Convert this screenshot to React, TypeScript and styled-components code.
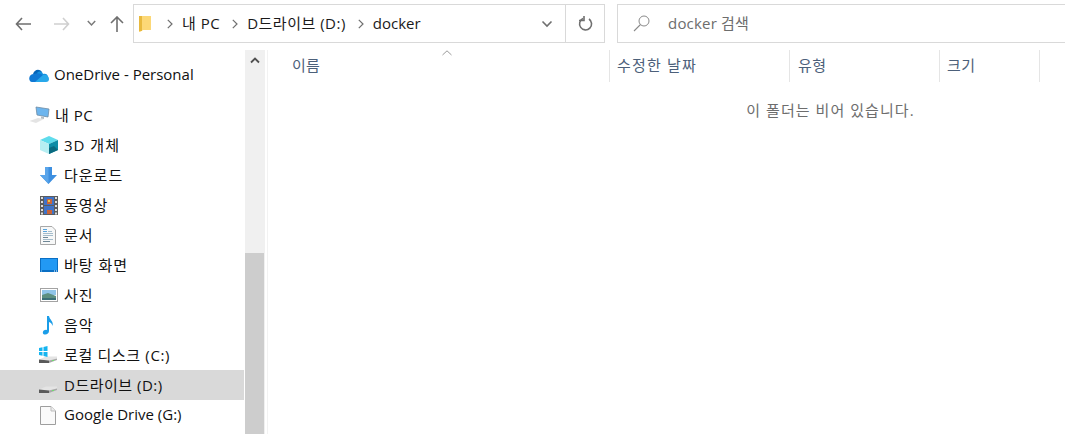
import React from "react";
import styled, { createGlobalStyle } from "styled-components";

const FONT = `"Open Sans", "Noto Sans CJK KR", sans-serif`;

const GlobalStyle = createGlobalStyle`
    html, body {
        margin: 0;
        padding: 0;
        background: #fff;
        overflow: hidden;
    }
    body {
        font-family: ${FONT};
        font-size: 15px;
    }
`;

const Window = styled.div`
    width: 1065px;
    height: 434px;
    display: flex;
    flex-direction: column;
    overflow: hidden;
`;

const Toolbar = styled.div`
    height: 50px;
    flex: none;
    display: flex;
    align-items: flex-start;
    padding-top: 4px;
    box-sizing: border-box;
`;

const NavGroup = styled.div`
    width: 133px;
    height: 39px;
    flex: none;
    display: flex;
    align-items: center;
    padding-left: 15px;
    box-sizing: border-box;
`;

const NavIcon = styled.svg<{ $gap: number }>`
    display: block;
    margin-right: ${(p) => p.$gap}px;
    flex: none;
`;

const AddressBox = styled.div`
    width: 472px;
    height: 39px;
    flex: none;
    display: flex;
    border: 1px solid #d9d9d9;
    box-sizing: border-box;
`;

const Crumbs = styled.div`
    flex: 1;
    display: flex;
    align-items: center;
    padding-left: 5px;
    color: #1a1a1a;
`;

const FolderIcon = styled.svg`
    display: block;
    flex: none;
    margin-right: 4px;
`;

const Label = styled.span<{ $track?: number }>`
    white-space: nowrap;
    letter-spacing: ${(p) => p.$track ?? 0}px;
    margin-bottom: 2px;
`;

const CrumbSep = styled.svg`
    display: block;
    flex: none;
    margin: 0 9px 0 12px;
`;

const AddressButton = styled.div<{ $width: number; $divided?: boolean }>`
    width: ${(p) => p.$width}px;
    flex: none;
    display: flex;
    align-items: center;
    justify-content: center;
    border-left: ${(p) => (p.$divided ? "1px solid #d9d9d9" : "none")};
    box-sizing: border-box;
`;

const SearchBox = styled.div`
    margin-left: 12px;
    flex: 1;
    height: 39px;
    display: flex;
    align-items: center;
    padding-left: 15px;
    border: 1px solid #d9d9d9;
    border-right: none;
    box-sizing: border-box;
    color: #6d6d6d;
`;

const SearchText = styled(Label)`
    margin-left: 18px;
`;

const Body = styled.div`
    flex: 1;
    display: flex;
    min-height: 0;
`;

const Sidebar = styled.nav`
    width: 245px;
    flex: none;
    padding-top: 10px;
    box-sizing: border-box;
`;

const NavRow = styled.div<{ $indent: number; $selected?: boolean; $spaced?: boolean }>`
    height: 30px;
    display: flex;
    align-items: center;
    padding-left: ${(p) => p.$indent}px;
    margin-right: 1px;
    margin-bottom: ${(p) => (p.$spaced ? 10 : 0)}px;
    background: ${(p) => (p.$selected ? "#d9d9d9" : "transparent")};
    color: #111;
`;

const RowIcon = styled.svg<{ $gap: number }>`
    display: block;
    flex: none;
    margin-right: ${(p) => p.$gap}px;
`;

const Scrollbar = styled.div`
    width: 20px;
    flex: none;
    display: flex;
    flex-direction: column;
    background: #f0f0f0;
`;

const ScrollUp = styled.div`
    height: 21px;
    display: flex;
    align-items: center;
    justify-content: center;
`;

const ScrollSpace = styled.div`
    height: 182px;
`;

const ScrollThumb = styled.div`
    flex: 1;
    margin-right: 1px;
    background: #cdcdcd;
`;

const Content = styled.main`
    flex: 1;
    min-width: 0;
    margin-left: 2px;
    border-left: 1px solid #f2f2f2;
`;

const Header = styled.div`
    position: relative;
    height: 32px;
    display: flex;
`;

const SortCaret = styled.svg`
    position: absolute;
    left: 174px;
    top: 0;
`;

const Column = styled.div<{ $width: number; $pad: number }>`
    width: ${(p) => p.$width}px;
    flex: none;
    padding-left: ${(p) => p.$pad}px;
    box-sizing: border-box;
    border-right: 1px solid #e5e5e5;
    color: #4c607a;
    line-height: 31px;
`;

const EmptyNote = styled.div`
    width: 1125px;
    margin-top: 17px;
    text-align: center;
    color: #6d6d6d;
    line-height: 22px;
    letter-spacing: 1.05px;
`;

const Chevron = ({ color }: { color: string }) => (
    <svg width="12" height="8" viewBox="0 0 12 8">
        <path d="M1.5 1.5 L6 6 L10.5 1.5" fill="none" stroke={color} strokeWidth="1.6" />
    </svg>
);

const Sep = () => (
    <CrumbSep width="6" height="10" viewBox="0 0 6 10">
        <path d="M0.8 0.8 L5 5 L0.8 9.2" fill="none" stroke="#6f6f6f" strokeWidth="1.2" />
    </CrumbSep>
);

const OneDriveIcon = () => (
    <RowIcon $gap={5} width="20" height="13" viewBox="0 0 20 13">
        <path d="M4 5 C5 1 10 -1 13 3 L11 10 Z" fill="#0364b8" />
        <path d="M8 4 C10 2 13 2 14 5 C16 4 19 5 19 8 L10 9 Z" fill="#1490df" />
        <path d="M5 5 C1 5 -1 9 1 12 Q1.500 13 3 13 L11 13 L14 6 Q9 3 5 5 Z" fill="#0f78d4" />
        <path d="M14 6 C17 5 20 7 20 10 C20 12 19 13 17 13 L6 13 Z" fill="#28a8ea" />
    </RowIcon>
);

const PcIcon = () => (
    <RowIcon $gap={4} width="22" height="18" viewBox="0 0 22 18">
        <path d="M7 1 L20 3 L19 11 L8 9 Z" fill="#6db5ee" stroke="#6f8ba3" strokeWidth="0.8" />
        <path d="M0.500 15 L9 12 L15 13 L7 17 Z" fill="#e4e4e4" />
        <path d="M12 10.500 L15 11 L15 13 L12 12.500 Z" fill="#b4bcc2" />
    </RowIcon>
);

const CubeIcon = () => (
    <RowIcon $gap={6} width="18" height="18" viewBox="0 0 18 18">
        <path d="M9 0 L18 4 L9 8 L0 4 Z" fill="#5fdcec" />
        <path d="M0 4 L9 8 L9 18 L0 14 Z" fill="#b6eef2" />
        <path d="M9 8 L18 4 L18 14 L9 18 Z" fill="#0d8ca6" />
        <path d="M9 12 L14 10 L18 14 L9 18 Z" fill="#0a6a80" />
    </RowIcon>
);

const DownloadIcon = () => (
    <RowIcon $gap={7} width="17" height="17" viewBox="0 0 17 17">
        <path d="M5 0 H12 V8 H17 L8.500 17 L0 8 H5 Z" fill="#3d8fe0" />
        <path d="M5 0 H8.500 V17 L0 8 H5 Z" fill="#5aa5ea" />
    </RowIcon>
);

const FilmIcon = () => (
    <RowIcon $gap={6} width="18" height="19" viewBox="0 0 18 19">
        <rect width="18" height="19" fill="#5c5c5c" />
        <rect x="1" y="1" width="2" height="2" fill="#ddd" />
        <rect x="1" y="5" width="2" height="2" fill="#ddd" />
        <rect x="1" y="9" width="2" height="2" fill="#ddd" />
        <rect x="1" y="13" width="2" height="2" fill="#ddd" />
        <rect x="1" y="16.500" width="2" height="2" fill="#ddd" />
        <rect x="15" y="1" width="2" height="2" fill="#ddd" />
        <rect x="15" y="5" width="2" height="2" fill="#ddd" />
        <rect x="15" y="9" width="2" height="2" fill="#ddd" />
        <rect x="15" y="13" width="2" height="2" fill="#ddd" />
        <rect x="15" y="16.500" width="2" height="2" fill="#ddd" />
        <rect x="4" y="1" width="10" height="8" fill="#3f73c8" />
        <rect x="4" y="10" width="10" height="8" fill="#3f73c8" />
        <rect x="7" y="3" width="5" height="5" fill="#c9653a" />
        <rect x="8" y="4" width="2" height="2" fill="#e8c84a" />
        <rect x="7" y="14" width="5" height="4" fill="#c9653a" />
    </RowIcon>
);

const DocIcon = () => (
    <RowIcon $gap={8} width="16" height="19" viewBox="0 0 16 19">
        <path d="M0.500 0.500 H12 L15.500 4 V18.500 H0.500 Z" fill="#f7f8f8" stroke="#a8a8a8" />
        <path d="M3 3.500 H7 M3 5.500 H7" stroke="#5aa5dc" strokeWidth="1" />
        <path d="M8 5.500 H12 M3 7.500 H13 M3 9.500 H13 M3 13.500 H13" stroke="#a4bccb" strokeWidth="1" />
        <path d="M3 11.500 H8 M3 15.500 H10" stroke="#6f8796" strokeWidth="1" />
    </RowIcon>
);

const DesktopIcon = () => (
    <RowIcon $gap={6} width="18" height="14" viewBox="0 0 18 14">
        <rect width="18" height="14" fill="#0a6fc4" />
        <rect x="1" y="1" width="16" height="11" fill="#2299f4" />
        <rect x="14" y="12.500" width="1" height="1" fill="#fff" />
        <rect x="16" y="12.500" width="1" height="1" fill="#fff" />
        <rect x="1" y="12.500" width="1" height="1" fill="#9fd4f7" />
    </RowIcon>
);

const PhotoIcon = () => (
    <RowIcon $gap={6} width="18" height="14" viewBox="0 0 18 14">
        <rect x="0.500" y="0.500" width="17" height="13" fill="#fff" stroke="#a3a3a3" />
        <rect x="2" y="2" width="14" height="5" fill="#8fc4e8" />
        <path d="M2 7 L8 5 L16 8 V12 H2 Z" fill="#5c8f80" />
        <rect x="2" y="10" width="14" height="2" fill="#3a6f78" />
    </RowIcon>
);

const MusicIcon = () => (
    <RowIcon $gap={7} width="17" height="19" viewBox="0 0 17 19">
        <path d="M7 0 H9 C9.500 4 14 5 12.500 10 C12 7.500 10.500 6.500 9 6 V15 C9 17.500 6.500 19 4.500 18.500 C2 18 2.500 14.500 5 14 Q6 13.700 7 14 Z" fill="#1b9de8" />
    </RowIcon>
);

const DriveBody = () => (
    <>
        <path d="M0 13.500 L7 10.500 H18 V12.500 L10 14.500 Z" fill="#e4e4e4" />
        <path d="M10 14.500 L18 12.500 V14 L10 17 Z" fill="#a9a9a9" />
        <path d="M0 13.500 L10 14.500 V17 H0 Z" fill="#5a5a5a" />
        <rect x="13" y="14" width="2" height="1" fill="#6fdc6f" />
    </>
);

const LocalDiskIcon = () => (
    <RowIcon $gap={6} width="19" height="18" viewBox="0 0 19 18">
        <DriveBody />
        <path d="M0 2 L3.500 1.200 V5 H0 Z M4.500 1 L8.500 0 V5 H4.500 Z M0 6 H3.500 V9.800 L0 9 Z M4.500 6 H8.500 V11 L4.500 10 Z" fill="#14b4f0" />
    </RowIcon>
);

const DriveIcon = () => (
    <RowIcon $gap={6} width="19" height="18" viewBox="0 0 19 18">
        <DriveBody />
    </RowIcon>
);

const FileIcon = () => (
    <RowIcon $gap={8} width="16" height="19" viewBox="0 0 16 19">
        <path d="M0.500 0.500 H11 L15.500 5 V18.500 H0.500 Z" fill="#fafafa" stroke="#9e9e9e" />
        <path d="M11 0.500 V5 H15.500" fill="#eee" stroke="#bdbdbd" />
    </RowIcon>
);

const App = () => {
    return (
        <Window>
            <GlobalStyle />
            <Toolbar>
                <NavGroup>
                    <NavIcon $gap={23} width="16" height="14" viewBox="0 0 16 14">
                        <path d="M7 1 L1.500 7 L7 13 M1.500 7 H16" fill="none" stroke="#6f6f6f" strokeWidth="1.6" />
                    </NavIcon>
                    <NavIcon $gap={17} width="16" height="14" viewBox="0 0 16 14">
                        <path d="M9 1 L14.500 7 L9 13 M14.500 7 H0" fill="none" stroke="#cfcfcf" strokeWidth="1.6" />
                    </NavIcon>
                    <NavIcon $gap={14} width="9" height="7" viewBox="0 0 9 7">
                        <path d="M0.800 1 L4.500 5 L8.200 1" fill="none" stroke="#7a7a7a" strokeWidth="1.500" />
                    </NavIcon>
                    <NavIcon $gap={0} width="14" height="16" viewBox="0 0 14 16">
                        <path d="M1 7 L7 1 L13 7 M7 1 V16" fill="none" stroke="#6f6f6f" strokeWidth="1.6" />
                    </NavIcon>
                </NavGroup>
                <AddressBox>
                    <Crumbs>
                        <FolderIcon width="12" height="16" viewBox="0 0 12 16">
                            <path d="M0 0 H12 V14 H4 L1 16 H0 Z" fill="#fcd877" />
                            <rect x="0" y="0" width="3" height="15" fill="#e8b93e" />
                        </FolderIcon>
                        <Sep />
                        <Label $track={0.5}>내 PC</Label>
                        <Sep />
                        <Label $track={0.5}>D드라이브 (D:)</Label>
                        <Sep />
                        <Label>docker</Label>
                    </Crumbs>
                    <AddressButton $width={36}>
                        <Chevron color="#6f6f6f" />
                    </AddressButton>
                    <AddressButton $width={39} $divided>
                        <svg width="15" height="16" viewBox="0 0 15 16">
                            <path d="M5 2.500 A6 6 0 1 0 11 3" fill="none" stroke="#6f6f6f" strokeWidth="1.600" />
                            <path d="M5 0 V5 H0" fill="none" stroke="#6f6f6f" strokeWidth="1.600" transform="translate(1 -0.500)" />
                        </svg>
                    </AddressButton>
                </AddressBox>
                <SearchBox>
                    <svg width="17" height="17" viewBox="0 0 17 17">
                        <circle cx="11" cy="6" r="5" fill="none" stroke="#8a8a8a" strokeWidth="1" />
                        <path d="M7.500 9.500 L1 16" stroke="#8a8a8a" strokeWidth="1.100" />
                    </svg>
                    <SearchText $track={0.2}>docker 검색</SearchText>
                </SearchBox>
            </Toolbar>
            <Body>
                <Sidebar>
                    <NavRow $indent={29} $spaced>
                        <OneDriveIcon />
                        <Label>OneDrive - Personal</Label>
                    </NavRow>
                    <NavRow $indent={29}>
                        <PcIcon />
                        <Label $track={0.5}>내 PC</Label>
                    </NavRow>
                    <NavRow $indent={40}>
                        <CubeIcon />
                        <Label $track={1}>3D 개체</Label>
                    </NavRow>
                    <NavRow $indent={40}>
                        <DownloadIcon />
                        <Label $track={1}>다운로드</Label>
                    </NavRow>
                    <NavRow $indent={40}>
                        <FilmIcon />
                        <Label $track={1}>동영상</Label>
                    </NavRow>
                    <NavRow $indent={40}>
                        <DocIcon />
                        <Label $track={1}>문서</Label>
                    </NavRow>
                    <NavRow $indent={40}>
                        <DesktopIcon />
                        <Label $track={1}>바탕 화면</Label>
                    </NavRow>
                    <NavRow $indent={40}>
                        <PhotoIcon />
                        <Label $track={1}>사진</Label>
                    </NavRow>
                    <NavRow $indent={40}>
                        <MusicIcon />
                        <Label $track={1}>음악</Label>
                    </NavRow>
                    <NavRow $indent={39}>
                        <LocalDiskIcon />
                        <Label $track={0.65}>로컬 디스크 (C:)</Label>
                    </NavRow>
                    <NavRow $indent={39} $selected>
                        <DriveIcon />
                        <Label $track={0.5}>D드라이브 (D:)</Label>
                    </NavRow>
                    <NavRow $indent={40}>
                        <FileIcon />
                        <Label>Google Drive (G:)</Label>
                    </NavRow>
                </Sidebar>
                <Scrollbar>
                    <ScrollUp>
                        <svg width="10" height="7" viewBox="0 0 10 7">
                            <path d="M1 5.500 L5 1.500 L9 5.500" fill="none" stroke="#505050" strokeWidth="1.800" />
                        </svg>
                    </ScrollUp>
                    <ScrollSpace />
                    <ScrollThumb />
                </Scrollbar>
                <Content>
                    <Header>
                        <SortCaret width="10" height="6" viewBox="0 0 10 6">
                            <path d="M0.500 5 L5 0.800 L9.500 5" fill="none" stroke="#9a9a9a" strokeWidth="1" />
                        </SortCaret>
                        <Column $width={342} $pad={24}><Label $track={0.2}>이름</Label></Column>
                        <Column $width={180} $pad={7}><Label $track={1.2}>수정한 날짜</Label></Column>
                        <Column $width={150} $pad={8}><Label $track={0.5}>유형</Label></Column>
                        <Column $width={100} $pad={7}><Label $track={0.5}>크기</Label></Column>
                    </Header>
                    <EmptyNote>이 폴더는 비어 있습니다.</EmptyNote>
                </Content>
            </Body>
        </Window>
    );
};

export default App;
